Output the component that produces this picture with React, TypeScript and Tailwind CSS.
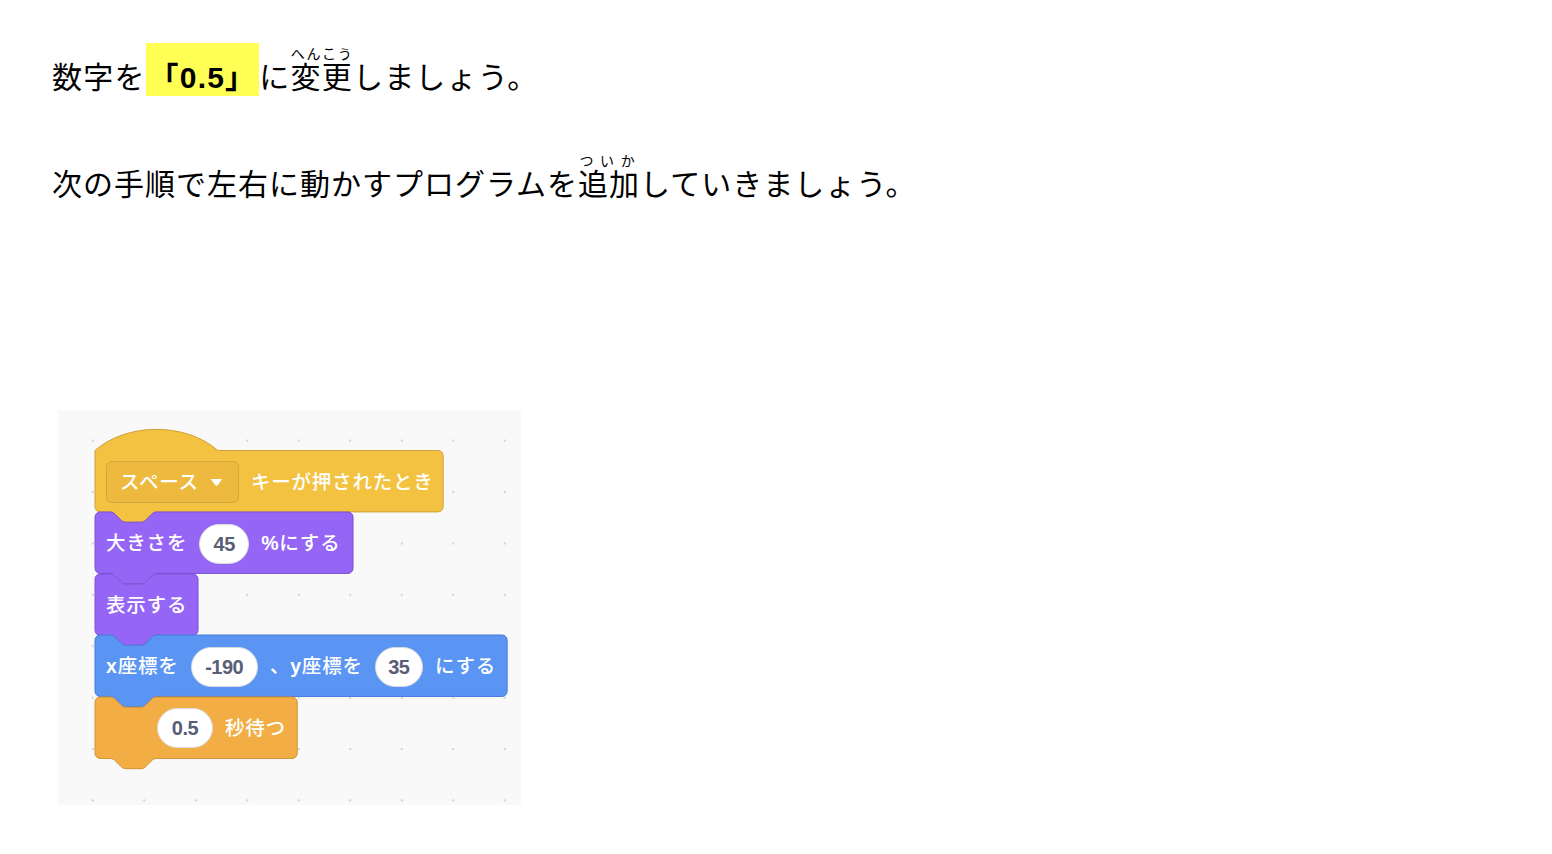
import type { ReactNode } from "react";

const S = 1.28;

// scratch-style block outline, in scratch units (scaled by S when drawn)
function blockPath(w: number, hat: boolean) {
  const t = hat ? 16 : 0;
  const h = 48;
  const top = hat
    ? `M 0,${t} c 25,-22 71,-22 96,0 H ${w - 4} a 4,4 0 0 1 4,4`
    : `M 0,4 A 4,4 0 0 1 4,0 H 12 c 2,0 3,1 4,2 l 4,4 c 1,1 2,2 4,2 h 12 c 2,0 3,-1 4,-2 l 4,-4 c 1,-1 2,-2 4,-2 H ${w - 4} a 4,4 0 0 1 4,4`;
  const rest = `V ${t + h - 4} a 4,4 0 0 1 -4,4 H 48 c -2,0 -3,1 -4,2 l -4,4 c -1,1 -2,2 -4,2 h -12 c -2,0 -3,-1 -4,-2 l -4,-4 c -1,-1 -2,-2 -4,-2 H 4 a 4,4 0 0 1 -4,-4 z`;
  return `${top} ${rest}`;
}

function Block({
  units,
  fill,
  stroke,
  hat = false,
  className,
  children,
}: {
  units: number;
  fill: string;
  stroke: string;
  hat?: boolean;
  className: string;
  children: ReactNode;
}) {
  const t = hat ? 16 : 0;
  return (
    <div className={`relative shrink-0 ${className}`}>
      <svg
        viewBox={`0 0 ${units} ${t + 56}`}
        width={units * S}
        height={(t + 56) * S}
        className="absolute left-0 top-0 overflow-visible"
      >
        <path d={blockPath(units, hat)} fill={fill} stroke={stroke} strokeWidth={1} vectorEffect="non-scaling-stroke" />
      </svg>
      <div className="relative flex h-[61.5px] items-center gap-[12px] px-[11px] pt-[2px]">{children}</div>
    </div>
  );
}

function Oval({ children, className = "" }: { children: ReactNode; className?: string }) {
  return (
    <span
      className={`flex h-[40px] items-center justify-center rounded-full border border-[#d9d9df] bg-white text-[20px] font-bold tracking-[-0.5px] text-[#575e75] ${className}`}
    >
      {children}
    </span>
  );
}

function Label({ children }: { children: ReactNode }) {
  return <span className="whitespace-nowrap text-[19.5px] font-medium tracking-[0.8px] text-white">{children}</span>;
}

export default function App() {
  return (
    <div className="min-h-screen bg-white pl-[52px] pt-[46px] text-black [font-family:'Liberation_Sans','Noto_Sans_CJK_JP',sans-serif]">
      <p className="text-[30px] leading-[58px] tracking-[1.2px]">
        数字を
        <span className="bg-[#ffff55] px-[3px] pb-[2px] pt-[18px] font-bold">「0.5」</span>
        に
        <ruby>
          変更<rt className="text-[14px] tracking-[1px]">へんこう</rt>
        </ruby>
        しましょう。
      </p>
      <p className="mt-[46px] text-[30px] leading-[58px] tracking-[1px]">
        次の手順で左右に動かすプログラムを
        <ruby>
          追加<rt className="text-[14px] tracking-[4px]">ついか</rt>
        </ruby>
        していきましょう。
      </p>

      <div className="ml-[6px] mt-[196px] h-[395px] w-[463px] bg-[#f9f9f9] bg-[radial-gradient(circle,#d4d4d4_1px,transparent_1.6px)] bg-[size:51.5px_51.4px] bg-[position:9px_5px] pl-[37px] pt-[20px]">
        <div className="flex flex-col">
          <Block units={272} fill="#f4c241" stroke="#cfa13a" hat className="w-[348px] pt-[20.5px]">
            <span className="flex h-[42px] items-center gap-[11px] rounded-[6px] border border-[#d2a73f] bg-[#edb93e] pl-[13px] pr-[15px]">
              <Label>スペース</Label>
              <svg width="13" height="9" viewBox="0 0 13 9">
                <path d="M1.5 1.5 h10 l-4.2 5.6 q-0.8 1 -1.6 0 z" fill="white" stroke="white" strokeLinejoin="round" />
              </svg>
            </span>
            <Label>キーが押されたとき</Label>
          </Block>
          <Block units={201.6} fill="#9566f5" stroke="#7d50d6" className="w-[258px]">
            <Label>大きさを</Label>
            <Oval className="w-[50px]">45</Oval>
            <Label>
              <span className="font-bold">%</span>にする
            </Label>
          </Block>
          <Block units={80.5} fill="#9566f5" stroke="#7d50d6" className="w-[103px]">
            <Label>表示する</Label>
          </Block>
          <Block units={322} fill="#5b95f4" stroke="#4479d6" className="w-[412px]">
            <Label>
              <span className="font-bold">x</span>座標を
            </Label>
            <Oval className="w-[70px]">-190</Oval>
            <Label>
              、<span className="font-bold">y</span>座標を
            </Label>
            <Oval className="w-[50px]">35</Oval>
            <Label>にする</Label>
          </Block>
          <Block units={158} fill="#f2ae45" stroke="#d09237" className="w-[202px]">
            <span className="w-[39px] shrink-0" />
            <Oval className="w-[56px]">0.5</Oval>
            <Label>秒待つ</Label>
          </Block>
        </div>
      </div>
    </div>
  );
}
